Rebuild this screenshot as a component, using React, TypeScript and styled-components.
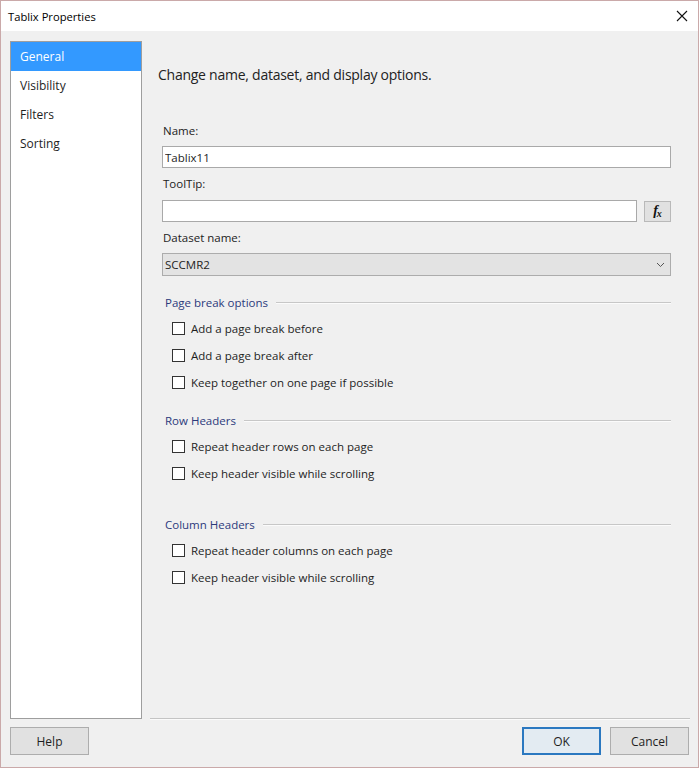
import * as React from "react";
import styled, { createGlobalStyle } from "styled-components";

const GlobalStyle = createGlobalStyle`
  html, body {
    margin: 0;
    padding: 0;
    background: #ffffff;
  }
  * {
    box-sizing: border-box;
  }
`;

const Window = styled.div`
  width: 699px;
  height: 768px;
  border: 1px solid #caa9a9;
  background: #f0f0f0;
  display: flex;
  flex-direction: column;
  font-family: "Open Sans", "Noto Sans", sans-serif;
  font-size: 11.5px;
  color: #1e1e1e;
`;

const TitleBar = styled.div`
  height: 30px;
  background: #ffffff;
  display: flex;
  align-items: center;
  justify-content: space-between;
  padding: 0 9px 0 7px;
`;

const Title = styled.span`
  font-size: 11.2px;
  color: #000;
`;

const CloseButton = styled.button`
  border: none;
  background: transparent;
  padding: 0;
  width: 14px;
  height: 14px;
  display: flex;
  align-items: center;
  justify-content: center;
`;

const Main = styled.div`
  flex: 1;
  display: flex;
  padding: 10px 8px 0 9px;
  min-height: 0;
`;

const Sidebar = styled.ul`
  width: 132px;
  margin: 0;
  padding: 0;
  list-style: none;
  background: #ffffff;
  border: 1px solid #9e9e9e;
`;

const NavItem = styled.li<{ $active?: boolean }>`
  height: 29px;
  line-height: 29px;
  padding-left: 9px;
  font-size: 12px;
  color: ${(p) => (p.$active ? "#ffffff" : "#1e1e1e")};
  background: ${(p) => (p.$active ? "#3399ff" : "transparent")};
`;

const ContentPane = styled.section`
  flex: 1;
  margin-left: 8px;
  border-bottom: 1px solid #c4c4c4;
  box-shadow: 0 1px 0 #fbfbfb;
  padding: 0 19px 0 8px;
  display: flex;
  flex-direction: column;
`;

const Heading = styled.h1`
  margin: 24px 0 0 0;
  height: 20px;
  line-height: 20px;
  font-size: 14px;
  letter-spacing: -0.25px;
  font-weight: normal;
  color: #222;
`;

const Form = styled.div`
  padding-left: 4px;
  margin-top: 38px;
  display: flex;
  flex-direction: column;
`;

const FieldLabel = styled.label`
  display: block;
  height: 16px;
  line-height: 16px;
  margin-left: 1px;
  color: #222;
`;

const TextBox = styled.input`
  display: block;
  width: 100%;
  height: 22px;
  margin: 7px 0 8px 0;
  padding: 0 2px;
  border: 1px solid #a9a9a9;
  background: #ffffff;
  font: inherit;
  color: #1e1e1e;
  outline: none;
`;

const InlineRow = styled.div`
  display: flex;
  align-items: center;
  gap: 7px;
  margin: 8px 0 8px 0;

  ${TextBox} {
    margin: 0;
  }
`;

const FxButton = styled.button`
  width: 27px;
  height: 21px;
  flex: none;
  border: 1px solid #b9b9b9;
  background: #e1e1e1;
  padding: 0;
  font-family: "Liberation Serif", serif;
  font-weight: bold;
  font-style: italic;
  font-size: 14px;
  color: #111;
  display: flex;
  align-items: center;
  justify-content: center;

  small {
    font-size: 10px;
    margin-top: 4px;
    margin-left: -1px;
  }
`;

const Select = styled.div`
  height: 23px;
  margin-top: 7px;
  border: 1px solid #acacac;
  background: #e3e3e3;
  display: flex;
  align-items: center;
  justify-content: space-between;
  padding: 0 5px 0 2px;
  color: #1e1e1e;
`;

const Group = styled.fieldset<{ $gap: number }>`
  border: none;
  margin: ${(p) => p.$gap}px 0 0 0;
  padding: 0;
`;

const GroupHeader = styled.legend`
  display: flex;
  align-items: center;
  width: 100%;
  padding: 0 0 0 3px;
  height: 16px;
  margin-bottom: -1px;
  color: #2c3a7c;

  &::after {
    content: "";
    flex: 1;
    margin-left: 8px;
    height: 1px;
    background: #c7c7c7;
    box-shadow: 0 1px 0 #fbfbfb;
  }
`;

const CheckRow = styled.label`
  display: flex;
  align-items: center;
  height: 16px;
  margin: 11px 0 0 10px;
`;

const CheckBox = styled.span`
  width: 13px;
  height: 13px;
  border: 1px solid #333;
  background: #ffffff;
  margin-right: 6px;
  flex: none;
`;

const Footer = styled.div`
  display: flex;
  align-items: center;
  justify-content: space-between;
  padding: 8px 9px 12px 9px;
`;

const ButtonGroup = styled.div`
  display: flex;
  gap: 9px;
`;

const DialogButton = styled.button<{ $default?: boolean }>`
  width: 79px;
  height: 28px;
  padding: 0;
  font: inherit;
  font-size: 12px;
  color: #1e1e1e;
  background: ${(p) => (p.$default ? "#e3ebf2" : "#e1e1e1")};
  border: ${(p) => (p.$default ? "2px solid #2b78c0" : "1px solid #adadad")};
`;

type CheckGroup = {
  title: string;
  gap: number;
  options: string[];
};

const groups: CheckGroup[] = [
  {
    title: "Page break options",
    gap: 18,
    options: [
      "Add a page break before",
      "Add a page break after",
      "Keep together on one page if possible",
    ],
  },
  {
    title: "Row Headers",
    gap: 22,
    options: ["Repeat header rows on each page", "Keep header visible while scrolling"],
  },
  {
    title: "Column Headers",
    gap: 35,
    options: ["Repeat header columns on each page", "Keep header visible while scrolling"],
  },
];

const pages = ["General", "Visibility", "Filters", "Sorting"];

const App = () => {
  return (
    <>
      <GlobalStyle />
      <Window>
        <TitleBar>
          <Title>Tablix Properties</Title>
          <CloseButton aria-label="Close">
            <svg width="12" height="12" viewBox="0 0 12 12">
              <path d="M1 1 L11 11 M11 1 L1 11" stroke="#111" strokeWidth="1.1" />
            </svg>
          </CloseButton>
        </TitleBar>
        <Main>
          <Sidebar>
            {pages.map((p) => (
              <NavItem key={p} $active={p === "General"}>
                {p}
              </NavItem>
            ))}
          </Sidebar>
          <ContentPane>
            <Heading>Change name, dataset, and display options.</Heading>
            <Form>
              <FieldLabel>Name:</FieldLabel>
              <TextBox defaultValue="Tablix11" />
              <FieldLabel>ToolTip:</FieldLabel>
              <InlineRow>
                <TextBox />
                <FxButton>
                  f<small>x</small>
                </FxButton>
              </InlineRow>
              <FieldLabel>Dataset name:</FieldLabel>
              <Select>
                <span>SCCMR2</span>
                <svg width="9" height="6" viewBox="0 0 9 6">
                  <polyline points="1,1 4.5,4.5 8,1" fill="none" stroke="#555" strokeWidth="1" />
                </svg>
              </Select>
              {groups.map((g) => (
                <Group key={g.title} $gap={g.gap}>
                  <GroupHeader>{g.title}</GroupHeader>
                  {g.options.map((o) => (
                    <CheckRow key={o}>
                      <CheckBox />
                      {o}
                    </CheckRow>
                  ))}
                </Group>
              ))}
            </Form>
          </ContentPane>
        </Main>
        <Footer>
          <DialogButton>Help</DialogButton>
          <ButtonGroup>
            <DialogButton $default>OK</DialogButton>
            <DialogButton>Cancel</DialogButton>
          </ButtonGroup>
        </Footer>
      </Window>
    </>
  );
};

export default App;
